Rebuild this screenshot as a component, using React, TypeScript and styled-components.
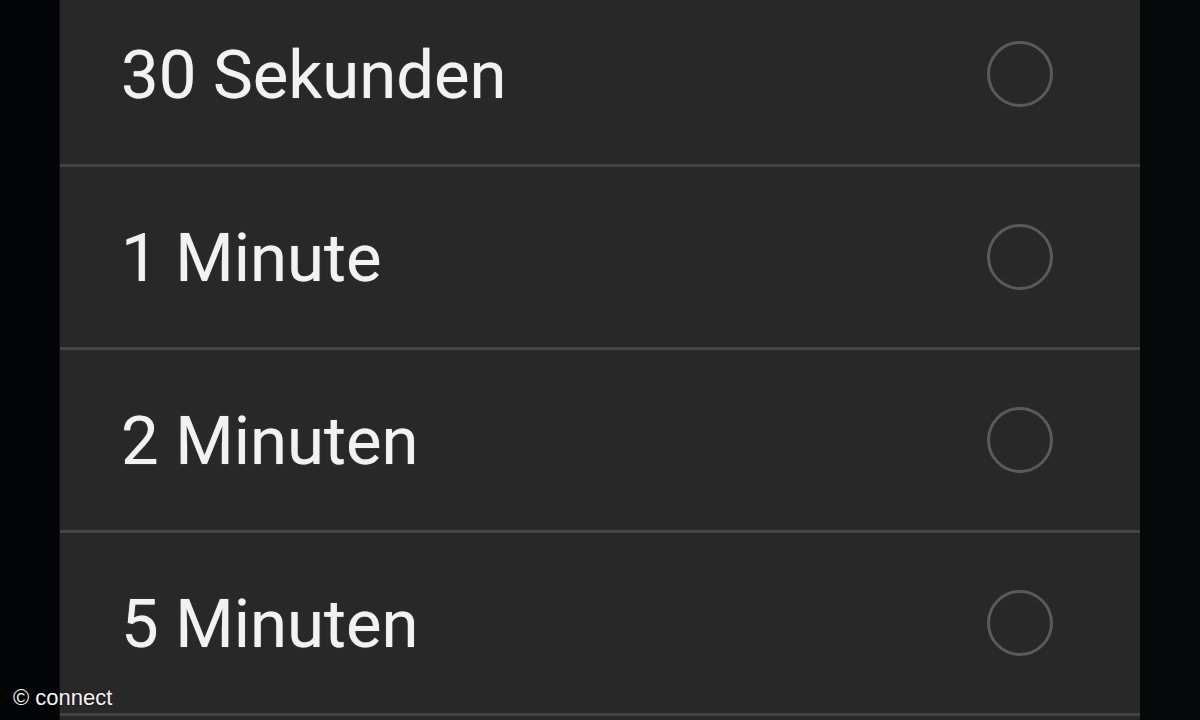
import styled, { createGlobalStyle } from "styled-components";

const options = ["30 Sekunden", "1 Minute", "2 Minuten", "5 Minuten"];

const GlobalStyle = createGlobalStyle`
  html, body {
    margin: 0;
    padding: 0;
    background: #050708;
    overflow: hidden;
  }
`;

export default function App() {
  return (
    <>
      <GlobalStyle />
      <Screen>
        <Panel>
          {options.map((label) => (
            <Row key={label}>
              <Label>{label}</Label>
              <Radio />
            </Row>
          ))}
        </Panel>
        <Credit>© connect</Credit>
      </Screen>
    </>
  );
}

const Screen = styled.div`
  position: relative;
  width: 1200px;
  height: 720px;
  overflow: hidden;
  background: linear-gradient(90deg, #030405 0%, #050708 40%, #060809 100%);
  display: flex;
  justify-content: center;
`;

const Panel = styled.ul`
  list-style: none;
  margin: -16px 0 0 0;
  padding: 0;
  width: 1080px;
  background: #282828;
  box-shadow: 1px 0 0 #0a0a0a, -1px 0 0 #111;
`;

const Row = styled.li`
  height: 180px;
  border-bottom: 3px solid #444444;
  display: flex;
  align-items: center;
  justify-content: space-between;
  padding: 0 87px 0 61px;
`;

const Label = styled.span`
  font-family: Roboto, "Noto Sans", sans-serif;
  font-size: 67px;
  color: #f2f2f2;
  line-height: 1;
  padding-top: 2px;
  text-shadow: 0 0 1px rgba(242, 242, 242, 0.6);
`;

const Radio = styled.span`
  width: 60px;
  height: 60px;
  border-radius: 50%;
  border: 3px solid #5a5a5a;
`;

const Credit = styled.div`
  position: absolute;
  left: 13px;
  bottom: 9px;
  font-family: "Liberation Sans", Arial, sans-serif;
  font-size: 22px;
  color: #f4f4f4;
  text-shadow: 0 0 2px rgba(0, 0, 0, 0.8);
`;
